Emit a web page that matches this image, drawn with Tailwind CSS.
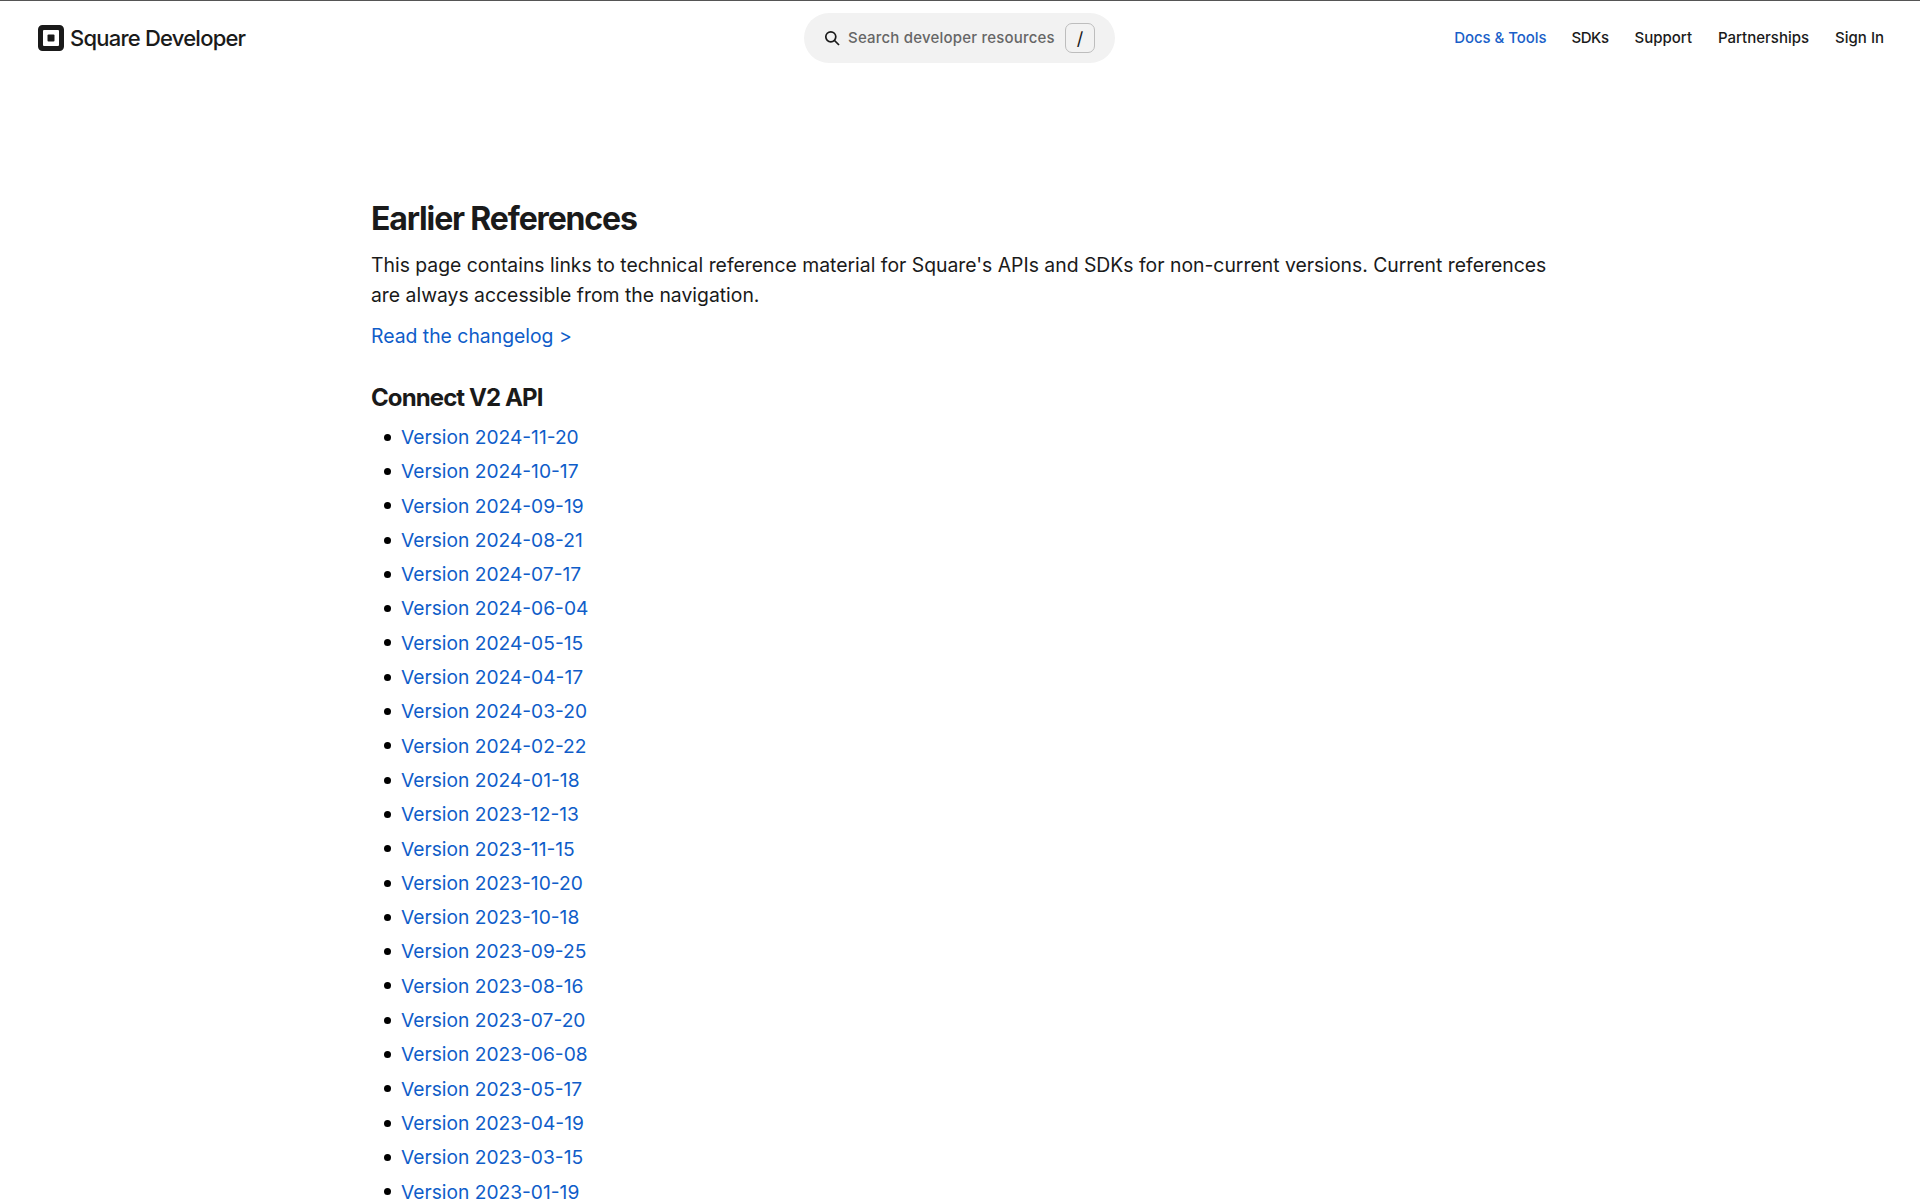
<!DOCTYPE html>
<html lang="en">
<head>
<meta charset="utf-8">
<title>Earlier References</title>
<script src="https://cdn.jsdelivr.net/npm/@tailwindcss/browser@4"></script>
</head>
<body class="h-[1200px] overflow-hidden bg-white font-['Inter',sans-serif] text-[#1a1a1a]">
  <!-- header -->
  <header class="flex h-[75px] items-center justify-between border-t border-[#555] pl-[38px] pr-[36px]">
    <a href="#" class="flex w-[400px] items-center gap-[6px]">
      <svg width="26" height="26" viewBox="0 0 26 26" class="shrink-0">
        <path fill="#1a1a1a" fill-rule="evenodd" d="M4.5 0h17A4.5 4.5 0 0 1 26 4.5v17a4.5 4.5 0 0 1-4.5 4.5h-17A4.5 4.5 0 0 1 0 21.5v-17A4.5 4.5 0 0 1 4.5 0zM6 5a1 1 0 0 0-1 1v14a1 1 0 0 0 1 1h14a1 1 0 0 0 1-1V6a1 1 0 0 0-1-1z"/>
        <rect x="9.5" y="9.5" width="7" height="7" rx="1" fill="#1a1a1a"/>
      </svg>
      <span class="text-[22px] leading-none font-[450] tracking-[-0.78px]">Square Developer</span>
    </a>
    <div class="flex h-[50px] w-[311px] items-center rounded-full bg-[#f2f2f2] px-[20px]">
      <svg width="16" height="16" viewBox="0 0 16 16" fill="none" stroke="#1a1a1a" stroke-width="1.7" class="shrink-0">
        <circle cx="6.8" cy="6.8" r="5"/><path d="M10.5 10.5L15 15"/>
      </svg>
      <span class="ml-[8px] whitespace-nowrap text-[15px] font-medium tracking-[0.2px] text-[#666]">Search developer resources</span>
      <span class="ml-auto flex h-[30px] w-[30px] items-center justify-center rounded-[7px] border border-[#bdbdbd] text-[18px]">/</span>
    </div>
    <nav class="flex w-[403px] items-center justify-end gap-[26px] text-[15px] font-medium whitespace-nowrap">
      <a href="#" class="mr-[-1px] tracking-[-0.05px] text-[#1a5fc9]">Docs &amp; Tools</a>
      <a href="#" class="tracking-[-0.5px]">SDKs</a>
      <a href="#">Support</a>
      <a href="#">Partnerships</a>
      <a href="#">Sign In</a>
    </nav>
  </header>

  <!-- content -->
  <main class="ml-[371px] w-[1190px] pt-[124px]">
    <h1 class="text-[32px] leading-[40px] font-[650] tracking-[-1.15px]">Earlier References</h1>
    <p class="mt-[11px] text-[19.37px] leading-[30px]">This page contains links to technical reference material for Square's APIs and SDKs for non-current versions. Current references are always accessible from the navigation.</p>
    <p class="mt-[11px] text-[19.37px] leading-[30px]"><a href="#" class="text-[#0f5dc9]">Read the changelog &gt;</a></p>
    <h2 class="mt-[31px] text-[24px] leading-[32px] font-[650] tracking-[-0.9px]">Connect V2 API</h2>
    <ul class="mt-[6px] pl-[13px] text-[19.2px] leading-[34.3px] [&>li]:flex [&>li]:items-center [&>li]:gap-[10px] [&>li]:before:h-[7px] [&>li]:before:w-[7px] [&>li]:before:rounded-full [&>li]:before:bg-black [&>li]:before:content-['']">
      <li><a href="#" class="text-[#0f5dc9]">Version 2024-11-20</a></li>
      <li><a href="#" class="text-[#0f5dc9]">Version 2024-10-17</a></li>
      <li><a href="#" class="text-[#0f5dc9]">Version 2024-09-19</a></li>
      <li><a href="#" class="text-[#0f5dc9]">Version 2024-08-21</a></li>
      <li><a href="#" class="text-[#0f5dc9]">Version 2024-07-17</a></li>
      <li><a href="#" class="text-[#0f5dc9]">Version 2024-06-04</a></li>
      <li><a href="#" class="text-[#0f5dc9]">Version 2024-05-15</a></li>
      <li><a href="#" class="text-[#0f5dc9]">Version 2024-04-17</a></li>
      <li><a href="#" class="text-[#0f5dc9]">Version 2024-03-20</a></li>
      <li><a href="#" class="text-[#0f5dc9]">Version 2024-02-22</a></li>
      <li><a href="#" class="text-[#0f5dc9]">Version 2024-01-18</a></li>
      <li><a href="#" class="text-[#0f5dc9]">Version 2023-12-13</a></li>
      <li><a href="#" class="text-[#0f5dc9]">Version 2023-11-15</a></li>
      <li><a href="#" class="text-[#0f5dc9]">Version 2023-10-20</a></li>
      <li><a href="#" class="text-[#0f5dc9]">Version 2023-10-18</a></li>
      <li><a href="#" class="text-[#0f5dc9]">Version 2023-09-25</a></li>
      <li><a href="#" class="text-[#0f5dc9]">Version 2023-08-16</a></li>
      <li><a href="#" class="text-[#0f5dc9]">Version 2023-07-20</a></li>
      <li><a href="#" class="text-[#0f5dc9]">Version 2023-06-08</a></li>
      <li><a href="#" class="text-[#0f5dc9]">Version 2023-05-17</a></li>
      <li><a href="#" class="text-[#0f5dc9]">Version 2023-04-19</a></li>
      <li><a href="#" class="text-[#0f5dc9]">Version 2023-03-15</a></li>
      <li><a href="#" class="text-[#0f5dc9]">Version 2023-01-19</a></li>
    </ul>
  </main>
</body>
</html>
